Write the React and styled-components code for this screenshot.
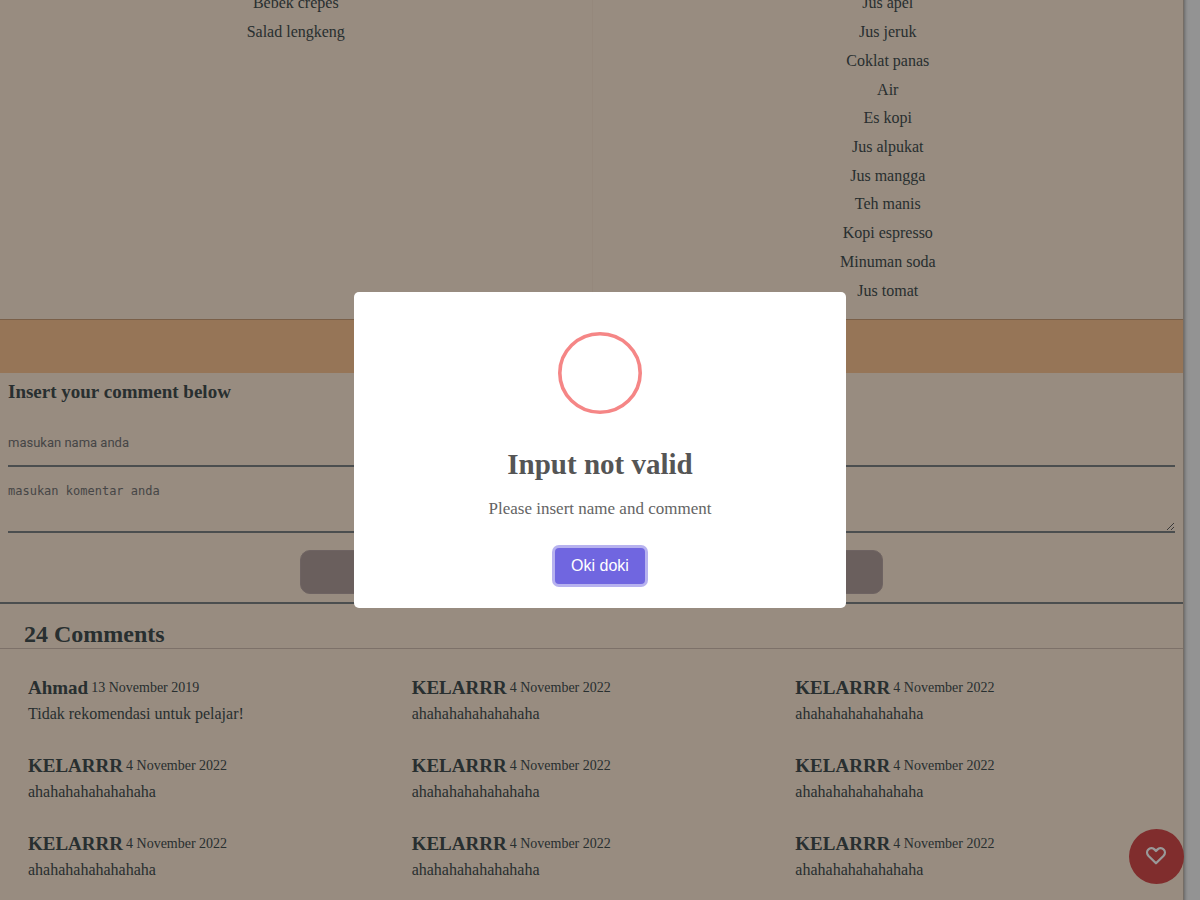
import React from "react";
import styled, { createGlobalStyle } from "styled-components";

const Global = createGlobalStyle`
  *, *::before, *::after { box-sizing: border-box; }
  body {
    margin: 0;
    background: #f5f5f5;
    color: #444f50;
    font: 16px/26px "Liberation Serif", serif;
    overflow: hidden;
  }
  h2, h3, p, ul { margin: 0; padding: 0; }
`;

const Page = styled.main`
  margin: -11px 16px 0 0;
  min-height: calc(100vh + 11px);
  border-right: 1px solid #c4b6a8;
  background: #fde9d5;
  box-shadow: 0 0 4px rgba(0, 0, 0, 0.5);
`;

const Menu = styled.section`
  display: grid;
  grid-template-columns: 1fr 1fr;
  padding-bottom: 14px;
`;

const MenuList = styled.ul`
  display: grid;
  grid-template-rows: repeat(11, 1fr);
  height: 316px;
  list-style: none;
  text-align: center;
  & + & { border-left: 1px solid #f8e3cf; }
`;

const MenuItem = styled.li`
  display: flex;
  align-items: center;
  justify-content: center;
`;

const Band = styled.div`
  height: 54px;
  border-top: 1px solid #cc9f78;
  background: #fac391;
`;

const Form = styled.form`
  display: flex;
  flex-direction: column;
  padding: 6px 8px 8px;
  border-bottom: 2px solid #7d8284;
`;

const FormTitle = styled.h3`
  font-size: 19px;
  line-height: 26px;
`;

const NameInput = styled.input`
  height: 48px;
  margin-top: 14px;
  padding: 0;
  border: 0;
  border-bottom: 2px solid #7d8284;
  background: transparent;
  font: 13px/16px Roboto, sans-serif;
  outline: 0;
  &::placeholder { color: #757575; }
`;

const CommentInput = styled.textarea`
  height: 66px;
  padding: 16px 0 0;
  border: 0;
  border-bottom: 2px solid #7d8284;
  background: transparent;
  font: 12px/16px "DejaVu Sans Mono", monospace;
  outline: 0;
  &::placeholder { color: #757575; }
`;

const Submit = styled.button`
  align-self: center;
  width: 50%;
  height: 44px;
  margin-top: 17px;
  border: 1px solid #b8a6a3;
  border-radius: 10px;
  background: #b19e9b;
  color: #fff;
`;

const CommentsTitle = styled.h2`
  padding: 17px 24px 0;
  border-bottom: 1px solid #d0bcb0;
  font-size: 24px;
  line-height: 27px;
`;

const Comments = styled.section`
  display: grid;
  grid-template-columns: repeat(3, 1fr);
  row-gap: 26px;
  padding: 26px 16px;
`;

const Comment = styled.article`
  padding-left: 12px;
`;

const CommentHead = styled.div`
  display: flex;
  align-items: center;
  gap: 3px;
`;

const Author = styled.h3`
  font-size: 19px;
  line-height: 26px;
`;

const Posted = styled.time`
  font-size: 14px;
  line-height: 26px;
`;

const LikeButton = styled.button`
  position: fixed;
  right: 16px;
  bottom: 16px;
  display: grid;
  place-items: center;
  width: 55px;
  height: 55px;
  padding: 0;
  border: 0;
  border-radius: 50%;
  background: #d64b4b;
  color: #fff;
`;

const Overlay = styled.div`
  position: fixed;
  inset: 0;
  display: grid;
  place-items: center;
  background: rgba(0, 0, 0, 0.4);
`;

const Dialog = styled.div`
  display: flex;
  flex-direction: column;
  align-items: center;
  width: 492px;
  max-width: calc(100% - 32px);
  padding: 40px 20px 24px;
  border-radius: 5px;
  background: #fff;
  text-align: center;
`;

const DialogTitle = styled.h2`
  margin-top: 32px;
  color: #555;
  font-size: 29px;
  line-height: 36px;
`;

const DialogText = styled.p`
  margin-top: 14px;
  color: #646464;
  font-size: 17px;
  line-height: 26px;
`;

const Confirm = styled.button`
  height: 36px;
  margin-top: 26px;
  padding: 0 16px;
  border: 0;
  border-radius: 4px;
  background: #7066e0;
  box-shadow: 0 0 0 3px #b7b2ef;
  color: #fff;
  font: 16px/20px "Liberation Sans", sans-serif;
  outline: 0;
`;

const foods = ["Bebek crepes", "Salad lengkeng"];
const drinks = [
  "Jus apel", "Jus jeruk", "Coklat panas", "Air", "Es kopi", "Jus alpukat",
  "Jus mangga", "Teh manis", "Kopi espresso", "Minuman soda", "Jus tomat",
];
const comments = [
  { name: "Ahmad", date: "13 November 2019", text: "Tidak rekomendasi untuk pelajar!" },
  ...Array.from({ length: 8 }, () => ({
    name: "KELARRR", date: "4 November 2022", text: "ahahahahahahahaha",
  })),
];

export default function App() {
  return (
    <>
      <Global />
      <Page>
        <Menu>
          {[foods, drinks].map((items, i) => (
            <MenuList key={i}>
              {items.map((item) => <MenuItem key={item}>{item}</MenuItem>)}
            </MenuList>
          ))}
        </Menu>
        <Band />
        <Form onSubmit={(e) => e.preventDefault()}>
          <FormTitle>Insert your comment below</FormTitle>
          <NameInput aria-label="Nama" placeholder="masukan nama anda" />
          <CommentInput aria-label="Komentar" placeholder="masukan komentar anda" />
          <Submit aria-label="Submit" />
        </Form>
        <CommentsTitle>24 Comments</CommentsTitle>
        <Comments>
          {comments.map((c, i) => (
            <Comment key={i}>
              <CommentHead>
                <Author>{c.name}</Author>
                <Posted>{c.date}</Posted>
              </CommentHead>
              <p>{c.text}</p>
            </Comment>
          ))}
        </Comments>
      </Page>
      <LikeButton aria-label="Like">
        <svg width="21" height="19" viewBox="0 0 21 19" fill="none" stroke="currentColor" strokeWidth="2.3" strokeLinejoin="round">
          <path d="M10 16.2 2.6 9C.7 7 .7 4.1 2.3 2.5c1.8-1.9 4.7-1.7 6.4.1L10 4l1.3-1.4c1.7-1.8 4.6-2 6.4-.1 1.6 1.6 1.6 4.5-.3 6.5Z" />
        </svg>
      </LikeButton>
      <Overlay>
        <Dialog role="dialog" aria-modal="true" aria-labelledby="dialog-title">
          <svg width="84" height="82" viewBox="0 0 84 82" fill="none" aria-hidden="true">
            <ellipse cx="42" cy="41" rx="40.2" ry="39.2" stroke="#f58686" strokeWidth="3.6" />
          </svg>
          <DialogTitle id="dialog-title">Input not valid</DialogTitle>
          <DialogText>Please insert name and comment</DialogText>
          <Confirm>Oki doki</Confirm>
        </Dialog>
      </Overlay>
    </>
  );
}
